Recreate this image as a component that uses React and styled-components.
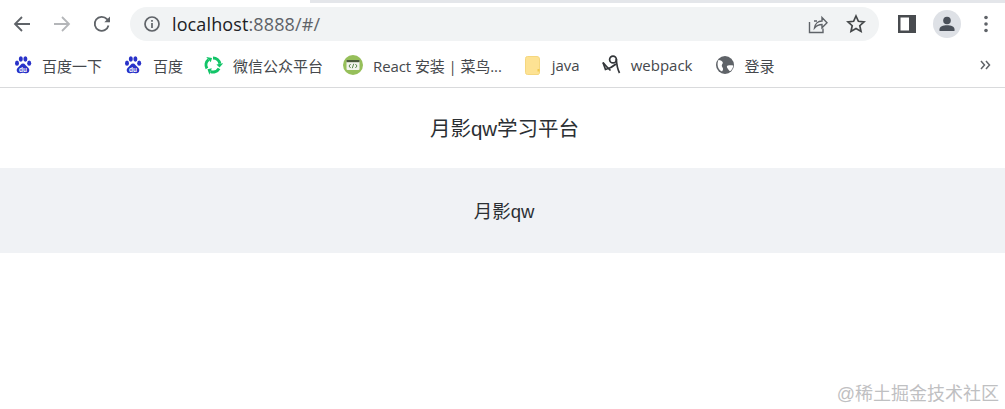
import React from "react";
import styled, { createGlobalStyle } from "styled-components";

const Global = createGlobalStyle`
  html, body { margin: 0; padding: 0; background: #fff; }
  body { font-family: "Liberation Sans", "Noto Sans CJK SC", sans-serif; }
`;
const Page = styled.div`
  position: relative;
  width: 1005px;
  height: 409px;
  overflow: hidden;
  background: #fff;
`;
const TabEdge = styled.div`
  height: 3px;
  margin-left: 310px;
  background: #e4e6ea;
`;
const Toolbar = styled.div`
  display: flex;
  align-items: center;
  height: 42px;
  padding: 0 8px;
  box-sizing: border-box;
`;
const NavButton = styled.div`
  width: 40px;
  height: 34px;
  margin-left: ${(p) => p.$ml || 0}px;
  display: flex;
  align-items: center;
  justify-content: center;
  flex: none;
`;
const Omnibox = styled.div`
  display: flex;
  align-items: center;
  flex: none;
  width: 749px;
  height: 34px;
  margin-left: 8px;
  padding: 0 14px;
  box-sizing: border-box;
  border-radius: 17px;
  background: #f1f3f4;
`;
const UrlText = styled.div`
  margin-left: 12px;
  font-size: 18px;
  letter-spacing: 0.12px;
  color: #202124;
  flex: 1;
  font-family: "Open Sans", "Liberation Sans", sans-serif;
  span { color: #5f6368; }
`;
const OmniActions = styled.div`
  display: flex;
  align-items: center;
  gap: 18px;
  margin-right: -1px;
`;
const ToolActions = styled.div`
  display: flex;
  align-items: center;
  margin-left: 8px;
`;
const ToolSlot = styled.div`
  width: ${(p) => p.$w}px;
  height: 34px;
  display: flex;
  align-items: center;
  justify-content: center;
`;
const Avatar = styled.div`
  width: 28px;
  height: 28px;
  border-radius: 50%;
  background: #dee1e6;
  display: flex;
  align-items: center;
  justify-content: center;
`;
const Bookmarks = styled.div`
  display: flex;
  align-items: center;
  height: 43px;
  box-sizing: border-box;
  border-bottom: 1px solid #d9dadc;
  padding: 0 0 2px 14px;
  color: #45484c;
`;
const Bookmark = styled.div`
  display: flex;
  align-items: center;
  gap: ${(p) => p.$gap || 10}px;
  margin-right: ${(p) => p.$mr}px;
  font-size: 15px;
  letter-spacing: ${(p) => p.$track || 0}px;
  white-space: nowrap;
  font-family: "Open Sans", "Noto Sans CJK SC", sans-serif;
  flex: none;
`;
const More = styled.div`
  margin-left: auto;
  margin-right: 14px;
  display: flex;
  align-items: center;
`;
const Header = styled.div`
  height: 80px;
  padding: 0 0 3px 4px;
  box-sizing: border-box;
  display: flex;
  align-items: center;
  justify-content: center;
  font-size: 20.5px;
  color: #2b2f33;
`;
const Banner = styled.div`
  height: 85px;
  padding: 0 0 2px 3px;
  box-sizing: border-box;
  background: #f0f2f5;
  display: flex;
  align-items: center;
  justify-content: center;
  font-size: 18.5px;
  color: #2b2f33;
`;
const Watermark = styled.div`
  position: absolute;
  right: 6px;
  bottom: 4px;
  font-size: 18px;
  color: #bfc0c2;
`;

const Paw = () => (
  <svg width="18" height="18" viewBox="0 0 18 18">
    <g fill="#2932c9">
      <ellipse cx="3" cy="7.2" rx="2" ry="2.6" />
      <ellipse cx="6.8" cy="3" rx="2" ry="2.7" />
      <ellipse cx="11.4" cy="3" rx="2" ry="2.7" />
      <ellipse cx="15.2" cy="7.2" rx="2" ry="2.6" />
      <path d="M9 7.4c-2 0-2.7 2.1-4.2 3.3C3.2 12 2.4 13.300 2.8 15c.4 1.700 2 2.400 3.500 2.200 1-.1 1.800-.4 2.700-.4s1.700.3 2.700.4c1.500.2 3.100-.5 3.500-2.200.4-1.700-.4-3-2-4.300C11.700 9.500 11 7.400 9 7.400z" />
    </g>
    <text x="9" y="15.500" textAnchor="middle" fontSize="6.500" fontWeight="700" fill="#fff" fontFamily="Liberation Sans, sans-serif">du</text>
  </svg>
);

const RingArc = ({ angle }) => (
  <g transform={`rotate(${angle} 10 10)`}>
    <path d="M3.940 13.500A7 7 0 0 1 5.500 4.640" fill="none" stroke="#12c468" strokeWidth="3" />
    <path d="M7.750 7.320L3.250 1.960 9.030 3.070z" fill="#12c468" />
  </g>
);

const WeRun = () => (
  <svg width="20" height="20" viewBox="0 0 20 20">
    <RingArc angle={0} />
    <RingArc angle={120} />
    <RingArc angle={240} />
  </svg>
);

const Runoob = () => (
  <svg width="20" height="20" viewBox="0 0 20 20">
    <circle cx="10" cy="10" r="10" fill="#96bf5a" />
    <rect x="3.500" y="5" width="13" height="10" rx="1" fill="#f3f4ee" />
    <rect x="3.500" y="5" width="13" height="2.200" fill="#4a5a3c" />
    <path d="M7.600 9l-1.600 2 1.600 2M12.400 9l1.600 2-1.600 2M10.700 8.800l-1.400 4.400" stroke="#4a7a3c" strokeWidth=".9" fill="none" />
  </svg>
);

const Folder = () => (
  <svg width="16" height="19" viewBox="0 0 16 19">
    <path d="M2.500 0.500h9.500a2.500 2.500 0 0 1 2.500 2.500v14l-1 1.500H2.500a2 2 0 0 1-2-2V2.500a2 2 0 0 1 2-2z" fill="#fde293" stroke="#f5d77f" />
    <rect x="12.500" y="13" width="2" height="2.500" fill="#f1c94f" />
  </svg>
);

const Webpack = () => (
  <svg width="20" height="20" viewBox="0 0 20 20" fill="none" stroke="#33363a" strokeWidth="1.700">
    <circle cx="11" cy="4.500" r="3.400" />
    <path d="M1 7.500l2.500 7c3.500-.8 7-2.500 10.500-5.500" />
    <path d="M1 7.500c2 2.500 4.500 5.200 7.500 8" />
    <path d="M14.300 4c.3 5 1.200 10 3.200 14" />
  </svg>
);

const Globe = () => (
  <svg width="20" height="20" viewBox="0 0 20 20">
    <circle cx="10" cy="10" r="9" fill="#5f6368" />
    <path d="M3.500 5c2.200.2 3.800 1 4.300 2.600.3 1-.8 1.500-1 2.700-.2 1.300 1 2 1.200 3.200.2 1-.2 2-1 3-2.500-1.200-4.300-3.600-4.400-6.500C2.500 8 2.800 6.300 3.500 5zM13 10.500c1.500-.5 3.500-.5 5.200 0-.2 2.200-1.300 4.400-3 5.800-1.200-.7-2.200-2.300-3-3.600-.6-1-.3-1.900.8-2.200z" fill="#fff" />
  </svg>
);

export default function App() {
  return (
    <Page>
      <Global />
      <TabEdge />
      <Toolbar>
        <NavButton $ml="-6">
          <svg width="18" height="18" viewBox="0 0 18 18" fill="none" stroke="#5f6368" strokeWidth="1.800">
            <path d="M17 9H2M9 2L2 9l7 7" />
          </svg>
        </NavButton>
        <NavButton>
          <svg width="18" height="18" viewBox="0 0 18 18" fill="none" stroke="#b4b6b9" strokeWidth="1.800">
            <path d="M1 9h15M9 2l7 7-7 7" />
          </svg>
        </NavButton>
        <NavButton>
          <svg width="18" height="18" viewBox="0 0 18 18" fill="none" stroke="#5f6368" strokeWidth="1.800">
            <path d="M15.500 10.500A7 7 0 1 1 14 4.200L16.500 6.500" />
            <path d="M17 1.500V7.200h-5.700z" fill="#5f6368" stroke="none" />
          </svg>
        </NavButton>
        <Omnibox>
          <svg width="16" height="16" viewBox="0 0 16 16" fill="none" stroke="#5f6368" strokeWidth="1.700" style={{ flex: "none" }}>
            <circle cx="8" cy="8" r="7" />
            <path d="M8 7v5M8 4v1.800" />
          </svg>
          <UrlText>localhost<span>:8888/#/</span></UrlText>
          <OmniActions>
            <svg width="20" height="20" viewBox="0 0 20 20" fill="none" stroke="#5f6368" strokeWidth="1.400">
              <path d="M1.500 8v10.500H15v-4M9 7H6M6.500 14c.5-4 3.500-7 7.500-7V3.500l5 5.200-5 5V10.500c-3 0-5.500 1.200-7.500 3.500z" />
            </svg>
            <svg width="20" height="20" viewBox="0 0 20 20" fill="none" stroke="#444749" strokeWidth="1.700">
              <path d="M10 2l2.400 5.300 5.600.6-4.200 3.800 1.200 5.700L10 14.500l-5 2.900 1.200-5.700L2 7.900l5.600-.6z" />
            </svg>
          </OmniActions>
        </Omnibox>
        <ToolActions>
          <ToolSlot $w="40">
            <svg width="18" height="18" viewBox="0 0 18 18">
              <path d="M0 0h18v18H0zM2.500 2.500v13H11v-13z" fill="#484b4f" fillRule="evenodd" />
            </svg>
          </ToolSlot>
          <ToolSlot $w="40">
            <Avatar>
              <svg width="18" height="18" viewBox="0 0 18 18" fill="#4a5059">
                <circle cx="9" cy="5.500" r="3.800" />
                <path d="M1.500 16v-1.800c0-2.500 3.500-3.900 7.500-3.900s7.500 1.400 7.500 3.900V16z" />
              </svg>
            </Avatar>
          </ToolSlot>
          <ToolSlot $w="38">
            <svg width="6" height="18" viewBox="0 0 6 18" fill="#5f6368">
              <circle cx="3" cy="2.500" r="1.800" />
              <circle cx="3" cy="9" r="1.800" />
              <circle cx="3" cy="15.500" r="1.800" />
            </svg>
          </ToolSlot>
        </ToolActions>
      </Toolbar>
      <Bookmarks>
        <Bookmark $mr="22"><Paw />百度一下</Bookmark>
        <Bookmark $mr="20" $gap="11"><Paw />百度</Bookmark>
        <Bookmark $mr="20"><WeRun />微信公众平台</Bookmark>
        <Bookmark $mr="23" $track="-0.1"><Runoob />React 安装 | 菜鸟...</Bookmark>
        <Bookmark $mr="22" $gap="11"><Folder />java</Bookmark>
        <Bookmark $mr="22" $gap="9"><Webpack />webpack</Bookmark>
        <Bookmark $mr="0" $gap="10"><Globe />登录</Bookmark>
        <More>
          <svg width="11" height="10" viewBox="0 0 11 10" fill="none" stroke="#5f6368" strokeWidth="1.500">
            <path d="M1 1l3.500 4L1 9M6 1l3.500 4L6 9" />
          </svg>
        </More>
      </Bookmarks>
      <Header>月影qw学习平台</Header>
      <Banner>月影qw</Banner>
      <Watermark>@稀土掘金技术社区</Watermark>
    </Page>
  );
}
